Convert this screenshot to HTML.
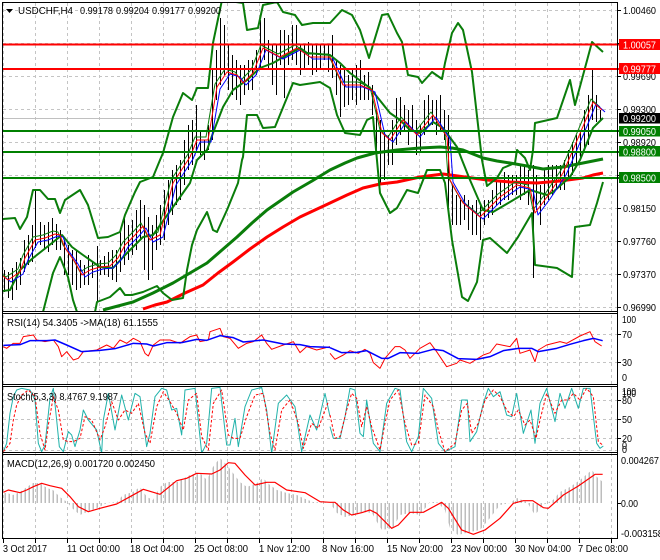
<!DOCTYPE html>
<html><head><meta charset="utf-8"><style>
html,body{margin:0;padding:0;background:#fff;width:660px;height:560px;overflow:hidden}
svg{display:block}
text{font-family:"Liberation Sans",sans-serif;font-size:10.5px;fill:#000}
.g{stroke:#c4c4c4;stroke-width:1;stroke-dasharray:3 3;fill:none}
.f{fill:none;stroke-linejoin:round}
.bb{fill:none;stroke:#0a7d0a;stroke-width:2;stroke-linejoin:round}
</style></head><body>
<svg width="660" height="560" viewBox="0 0 660 560" xmlns="http://www.w3.org/2000/svg">
<defs>
<clipPath id="cm"><rect x="3" y="3" width="614" height="308"/></clipPath>
<clipPath id="cs"><rect x="3" y="386" width="614" height="66"/></clipPath>
<pattern id="hp" width="4" height="10" patternUnits="userSpaceOnUse" x="0.5"><rect x="0" y="0" width="1.5" height="10" fill="#bdbdbd"/></pattern>
<path id="ma" d="M3 276L8 280L20 272L25 258L35 240L45 238L55 234L60 235L65 248L75 262L82 275L90 270L100 267L110 266L118 258L125 245L135 235L143 226L150 240L160 235L173 183L190 157L197 140L208 140L217 87L227 72L237 75L243 83L253 73L263 48L280 57L297 48L310 57L330 57L343 85L360 85L372 90L382 133L390 140L403 120L417 135L433 115L447 137L450 180L463 203L480 217L500 197L517 185L530 188L535 213L547 197L563 173L573 150L587 117L593 102L602 110"/>
</defs>
<rect width="660" height="560" fill="#fff"/>
<path class="g" d="M3.5 3V538M35.5 3V538M67.5 3V538M99.5 3V538M131.5 3V538M163.5 3V538M195.5 3V538M227.5 3V538M259.5 3V538M291.5 3V538M323.5 3V538M355.5 3V538M387.5 3V538M419.5 3V538M451.5 3V538M483.5 3V538M515.5 3V538M547.5 3V538M579.5 3V538M611.5 3V538"/>
<path class="g" d="M3 10.5H617M3 43.5H617M3 76.5H617M3 109.5H617M3 142.5H617M3 175.5H617M3 208.5H617M3 241.5H617M3 274.5H617M3 307.5H617M3 334.5H617M3 362.5H617M3 400.5H617M3 419.5H617M3 438.5H617M3 450.5H617"/>
<path d="M3 118.5H617" stroke="#c0c0c0" stroke-width="1"/>
<g clip-path="url(#cm)">
<path stroke="#000" stroke-width="1" fill="none" d="M4.5 270V292M8.5 272V298M12.5 268V300M16.5 262V290M20.5 258V285M24.5 240V272M28.5 235V265M32.5 225V262M35.5 190V248M40.5 222V245M44.5 225V250M48.5 222V252M52.5 218V245M56.5 224V250M60.5 230V250M64.5 240V275M68.5 245V275M72.5 250V285M76.5 250V290M80.5 260V288M84.5 265V285M88.5 255V285M92.5 262V278M97.5 246V301M100.5 260V275M104.5 256V275M108.5 252V277M112.5 250V280M116.5 250V282M120.5 230V272M124.5 216V265M128.5 225V260M132.5 220V255M136.5 210V250M140.5 200V240M144.5 205V270M148.5 217V280M152.5 225V270M156.5 215V250M160.5 205V245M164.5 190V240M168.5 180V225M172.5 170V215M176.5 165V205M180.5 160V200M184.5 140V185M188.5 125V170M192.5 120V165M196.5 105V150M200.5 130V155M204.5 140V160M208.5 125V150M212.5 70V140M216.5 50V100M220.5 18V85M224.5 25V75M228.5 45V90M232.5 55V95M236.5 60V100M240.5 65V105M244.5 65V95M248.5 60V90M252.5 60V90M256.5 50V75M260.5 20V70M264.5 18V60M268.5 40V70M272.5 45V85M276.5 45V95M280.5 30V65M284.5 30V98M288.5 35V65M292.5 25V60M296.5 25V65M300.5 45V75M304.5 45V70M308.5 42V65M312.5 45V75M316.5 45V72M320.5 45V70M324.5 45V60M328.5 45V72M332.5 35V78M336.5 60V95M340.5 65V117M344.5 70V107M348.5 75V105M352.5 70V100M356.5 65V105M360.5 60V100M364.5 75V100M368.5 72V100M372.5 85V115M376.5 110V160M380.5 120V185M384.5 130V180M388.5 135V165M392.5 120V165M396.5 98V145M400.5 97V135M404.5 105V130M408.5 110V145M412.5 105V130M416.5 120V155M420.5 125V153M424.5 100V135M428.5 95V125M432.5 100V125M436.5 100V135M440.5 95V130M444.5 110V140M448.5 115V210M452.5 185V225M456.5 195V225M460.5 200V225M464.5 195V220M468.5 200V230M472.5 205V235M476.5 200V235M480.5 205V240M484.5 200V225M488.5 200V218M492.5 190V215M496.5 180V205M500.5 180V205M504.5 172V200M508.5 175V200M512.5 175V195M516.5 175V195M520.5 165V200M524.5 165V195M528.5 170V205M533.5 165V278M536.5 175V210M540.5 185V225M544.5 170V205M548.5 165V200M552.5 165V195M556.5 165V190M560.5 165V190M564.5 160V190M568.5 150V180M572.5 142V175M576.5 135V165M580.5 130V160M584.5 110V150M588.5 95V145M592.5 70V120M596.5 95V122M600.5 110V120"/>
<path class="f" stroke="#0a7d0a" stroke-width="3" d="M103 310L118 306L133 302L153 293L173 283L190 273L207 263L222 250L237 237L252 223L267 210L280 201L293 192L312 181L330 170L345 163L357 158L375 153L397 150L420 148L440 147L452 148L463 150L473 154L483 158L497 161L510 163L527 166L543 169L553 168L563 167L583 163L603 159"/>
<path class="f" stroke="#f00" stroke-width="3" d="M143 309L155 305L167 302L185 293L203 285L218 273L233 262L250 249L267 237L283 227L300 217L315 210L330 203L347 195L363 188L380 184L397 182L420 177L443 174L465 177L487 180L510 182L537 183L560 181L583 178L593 175L603 173"/>
<path class="bb" d="M3 219L15 218L20 229L27 217L33 190L40 190L48 199L55 199L60 213L65 200L80 190L88 205L98 238L108 237L120 232L125 215L135 192L140 182L153 177L160 160L163 153L173 117L183 93L192 100L197 88L208 88L213 43L222 0L243 3L247 30L258 28L263 5L277 2L283 12L295 15L302 25L313 23L330 23L342 10L352 15L360 30L369 58L382 15L388 14L397 33L402 42L408 75L418 77L422 83L432 72L442 79L445 63L452 33L458 23L463 30L472 72L482 160L487 186L497 178L503 168L515 163L517 150L525 158L530 170L533 150L535 123L557 118L570 80L575 105L592 42L603 52"/>
<path class="bb" d="M3 291L10 290L20 270L33 258L47 247L62 235L72 247L83 255L100 267L113 268L127 253L143 237L153 235L173 207L190 183L197 160L207 150L213 133L223 107L233 90L247 80L260 68L273 63L287 55L300 48L307 53L330 55L340 63L350 73L370 88L390 113L400 120L410 130L420 133L433 122L443 128L457 147L462 160L470 180L483 210L493 212L510 202L530 190L547 195L553 192L570 177L580 160L593 128L603 118"/>
<path class="bb" d="M43 312L53 273L60 257L68 277L73 300L77 312M95 312L97 302L110 297L120 288L125 295L132 295L143 292L157 286L163 293L172 300L183 298L187 270L192 245L197 230L207 212L213 230L217 232L227 210L238 183L242 160L243 157L247 115L257 115L263 128L275 127L293 83L300 85L320 82L330 88L337 115L345 133L360 135L367 120L373 117L380 193L390 213L397 208L407 190L418 193L427 170L440 170L445 183L452 240L462 297L468 301L477 282L483 240L490 238L507 253L518 237L532 213L535 265L557 268L572 277L575 227L590 225L597 203L603 182"/>
<use href="#ma" class="f" stroke="#0a7d0a" stroke-width="1" transform="translate(-2,-3)"/>
<use href="#ma" class="f" stroke="#00f" stroke-width="1" transform="translate(3,2)"/>
<use href="#ma" class="f" stroke="#f00" stroke-width="1"/>
</g>
<path d="M3 44.5H619M3 69H619" stroke="#f00" stroke-width="2"/>
<path d="M3 131H619M3 152H619M3 178H619" stroke="#008000" stroke-width="2"/>

<!-- RSI -->
<g transform="translate(0,310) scale(.33333)" fill="none" stroke-width="3" stroke-linejoin="round">
<path stroke="#f00" d="M10 110L20 115L40 100L60 100L70 80L100 75L110 90L135 95L160 90L175 110L185 140L200 125L220 150L235 145L250 125L290 120L320 105L340 115L360 90L380 100L400 85L420 95L435 130L445 138L460 105L480 90L510 90L540 100L570 80L590 75L600 95L625 90L630 65L660 55L670 80L690 85L715 115L740 100L760 95L785 75L800 100L815 118L850 105L880 95L900 128L920 110L950 120L990 110"/>
<path stroke="#00f" stroke-width="4.5" d="M10 106L60 104L90 92L140 92L165 90L200 105L245 125L300 121L345 116L400 100L440 102L460 108L500 98L545 98L590 88L620 91L660 77L700 83L730 96L790 90L850 102L900 104L930 110L990 112"/>
</g>
<g transform="translate(330,310) scale(.33333)" fill="none" stroke-width="3" stroke-linejoin="round">
<path stroke="#f00" d="M0 130L15 148L40 135L60 122L85 130L105 118L120 130L130 158L150 175L165 145L195 110L210 110L225 120L240 145L270 115L300 98L320 125L350 170L380 160L390 150L420 160L460 135L480 128L500 102L540 110L560 85L570 130L600 120L615 155L625 120L650 105L690 95L710 100L750 78L780 65L795 95L815 108"/>
<path stroke="#00f" stroke-width="4.5" d="M0 113L35 128L80 127L110 122L155 145L175 145L210 128L265 130L310 118L340 122L385 146L440 148L480 140L520 122L565 115L605 115L625 125L680 115L720 103L760 92L790 85L818 92"/>
</g>

<!-- Stochastic -->
<g clip-path="url(#cs)">
<g transform="translate(0,310) scale(.33333)" fill="none" stroke-width="3" stroke-linejoin="round">
<path stroke="#20b2aa" d="M10 425L20 400L30 310L40 260L50 240L65 235L90 240L105 270L115 400L125 425L135 405L150 265L160 235L170 330L178 410L190 425L205 365L215 375L225 410L240 360L250 300L265 330L290 360L305 430L310 330L325 250L345 360L365 255L385 330L405 250L420 260L440 410L450 370L465 260L485 235L500 240L515 300L530 295L545 375L555 240L585 235L605 430L620 400L635 235L660 232L680 405L690 405L705 325L715 410L735 290L755 240L785 232L800 300L815 430L835 280L860 255L885 290L905 425L930 315L950 360L975 250L990 320"/>
<path stroke="#f00" stroke-dasharray="8 6" d="M10 425L30 400L40 330L50 285L65 255L85 240L105 260L120 370L135 420L145 345L160 260L175 300L190 390L205 395L220 395L240 385L255 320L275 330L300 390L315 350L335 275L355 330L375 300L395 310L415 280L435 370L450 400L470 290L490 245L510 275L530 310L550 360L565 270L590 250L605 380L625 420L640 280L665 240L685 375L700 385L720 385L740 320L765 255L790 250L810 370L825 420L845 300L870 270L895 340L910 415L935 340L955 355L985 275"/>
</g>
<g transform="translate(330,310) scale(.33333)" fill="none" stroke-width="3" stroke-linejoin="round">
<path stroke="#20b2aa" d="M0 350L10 385L30 385L45 320L60 235L75 240L90 370L100 380L110 270L130 400L150 425L170 280L195 235L210 240L230 395L245 425L265 380L280 235L305 265L325 400L345 425L375 410L395 270L412 270L420 395L440 365L460 280L475 235L490 260L510 245L530 315L545 320L560 250L580 370L603 300L615 400L630 280L650 235L675 335L690 250L705 295L725 235L745 295L760 235L780 235L800 400L810 415L820 408"/>
<path stroke="#f00" stroke-dasharray="8 6" d="M0 315L15 385L30 380L50 300L65 250L80 265L95 350L110 290L125 350L150 420L165 340L180 270L205 240L225 340L245 405L265 400L285 255L310 290L325 360L345 425L375 400L395 300L412 280L425 370L445 340L465 270L490 240L510 260L530 300L550 320L565 300L585 345L600 330L618 385L630 330L650 250L675 310L695 270L715 270L730 250L750 270L770 235L790 260L805 395L818 405"/>
</g>
</g>

<!-- MACD -->
<path fill="url(#hp)" d="M3 503V493L7 493L13 495L20 492L27 487L33 483L40 483L47 488L53 490L60 497L67 502L72 508L80 515L87 512L97 508L107 503L117 502L123 495L133 492L140 487L147 497L153 500L160 487L167 482L177 482L190 475L200 473L207 480L213 467L220 458L227 465L233 473L240 482L247 487L257 483L263 478L270 485L277 490L287 493L297 495L303 498L313 502L330 503L337 513L345 517L353 515L363 512L372 513L377 522L382 530L393 528L400 515L410 513L420 515L430 502L437 502L445 510L450 528L458 535L470 532L480 530L490 518L500 505L510 503L517 498L527 502L535 515L543 505L553 500L560 492L570 487L580 480L592 470L597 477L604 483V503Z"/>
<g transform="translate(0,440) scale(.33333)" fill="none" stroke="#f00" stroke-width="3.6" stroke-linejoin="round">
<path d="M10 157L25 150L60 158L80 150L100 140L125 130L150 137L185 145L210 170L235 200L265 215L300 205L350 192L390 170L430 148L480 163L530 122L560 115L590 100L635 102L660 90L685 68L705 70L735 105L765 135L800 127L825 127L860 150L915 158L960 185L990 187"/>
</g>
<g transform="translate(330,440) scale(.33333)" fill="none" stroke="#f00" stroke-width="3.6" stroke-linejoin="round">
<path d="M0 187L15 187L40 210L65 225L95 218L120 210L140 220L185 265L205 255L240 217L280 217L335 187L355 205L395 270L430 283L465 270L510 235L550 190L580 182L608 182L640 203L655 205L700 165L745 138L795 103L818 103"/>
</g>

<!-- Frame -->
<path fill="none" stroke="#000" stroke-width="1" d="M2.5 2.5H617.5V538.5H2.5ZM2.5 311.5H617.5M2.5 313.5H617.5M2.5 384.5H617.5M2.5 386.5H617.5M2.5 452.5H617.5M2.5 454.5H617.5"/>
<path stroke="#000" stroke-width="1" d="M617 10.5H621M617 43.5H621M617 76.5H621M617 109.5H621M617 142.5H621M617 175.5H621M617 208.5H621M617 241.5H621M617 274.5H621M617 307.5H621M617 334.5H621M617 362.5H621M617 400.5H621M617 419.5H621M617 438.5H621M617 503.5H621M3.5 539V543M35.5 539V543M67.5 539V543M99.5 539V543M131.5 539V543M163.5 539V543M195.5 539V543M227.5 539V543M259.5 539V543M291.5 539V543M323.5 539V543M355.5 539V543M387.5 539V543M419.5 539V543M451.5 539V543M483.5 539V543M515.5 539V543M547.5 539V543M579.5 539V543M611.5 539V543"/>

<!-- Titles -->
<path d="M6 9H13L9.5 13Z" fill="#000"/>
<text x="18" y="14" textLength="55" lengthAdjust="spacingAndGlyphs">USDCHF,H4</text>
<text x="80" y="14" textLength="33" lengthAdjust="spacingAndGlyphs">0.99178</text>
<text x="116" y="14" textLength="33" lengthAdjust="spacingAndGlyphs">0.99204</text>
<text x="152" y="14" textLength="33" lengthAdjust="spacingAndGlyphs">0.99177</text>
<text x="188" y="14" textLength="33" lengthAdjust="spacingAndGlyphs">0.99200</text>
<text x="7" y="326" textLength="151" lengthAdjust="spacingAndGlyphs">RSI(14) 54.3405  -&gt;MA(18) 61.1555</text>
<text x="7" y="400" textLength="111" lengthAdjust="spacingAndGlyphs">Stoch(5,3,3) 8.4767 9.1987</text>
<text x="7" y="467" textLength="148" lengthAdjust="spacingAndGlyphs">MACD(12,26,9) 0.001720 0.002450</text>

<!-- Right axis -->
<g>
<text x="623" y="14" textLength="33" lengthAdjust="spacingAndGlyphs">1.00460</text>
<text x="623" y="80" textLength="33" lengthAdjust="spacingAndGlyphs">0.99690</text>
<text x="623" y="113" textLength="33" lengthAdjust="spacingAndGlyphs">0.99300</text>
<text x="623" y="146" textLength="33" lengthAdjust="spacingAndGlyphs">0.98920</text>
<text x="623" y="212" textLength="33" lengthAdjust="spacingAndGlyphs">0.98150</text>
<text x="623" y="245" textLength="33" lengthAdjust="spacingAndGlyphs">0.97760</text>
<text x="623" y="278" textLength="33" lengthAdjust="spacingAndGlyphs">0.97370</text>
<text x="623" y="311" textLength="33" lengthAdjust="spacingAndGlyphs">0.96990</text>
</g>
<rect x="619" y="39" width="41" height="11" fill="#f00"/>
<text x="623" y="48.5" textLength="33" lengthAdjust="spacingAndGlyphs" style="fill:#fff">1.00057</text>
<rect x="619" y="63" width="41" height="11" fill="#f00"/>
<text x="623" y="72.5" textLength="33" lengthAdjust="spacingAndGlyphs" style="fill:#fff">0.99777</text>
<rect x="619" y="113" width="41" height="10.5" fill="#000"/>
<text x="623" y="122" textLength="33" lengthAdjust="spacingAndGlyphs" style="fill:#fff">0.99200</text>
<rect x="619" y="126" width="41" height="10.5" fill="#008000"/>
<text x="623" y="135" textLength="33" lengthAdjust="spacingAndGlyphs" style="fill:#fff">0.99050</text>
<rect x="619" y="146" width="41" height="10.5" fill="#008000"/>
<text x="623" y="155.5" textLength="33" lengthAdjust="spacingAndGlyphs" style="fill:#fff">0.98800</text>
<rect x="619" y="172" width="41" height="11" fill="#008000"/>
<text x="623" y="181.5" textLength="33" lengthAdjust="spacingAndGlyphs" style="fill:#fff">0.98500</text>

<text x="622" y="323" textLength="14" lengthAdjust="spacingAndGlyphs">100</text>
<text x="622" y="338" textLength="10" lengthAdjust="spacingAndGlyphs">70</text>
<text x="622" y="366" textLength="10" lengthAdjust="spacingAndGlyphs">30</text>
<text x="622" y="381" textLength="5" lengthAdjust="spacingAndGlyphs">0</text>
<text x="622" y="395" textLength="14" lengthAdjust="spacingAndGlyphs">100</text>
<text x="622" y="397" textLength="14" lengthAdjust="spacingAndGlyphs">100</text>
<text x="622" y="404" textLength="10" lengthAdjust="spacingAndGlyphs">80</text>
<text x="622" y="423" textLength="10" lengthAdjust="spacingAndGlyphs">50</text>
<text x="622" y="442" textLength="10" lengthAdjust="spacingAndGlyphs">20</text>
<text x="622" y="449" textLength="5" lengthAdjust="spacingAndGlyphs">0</text>
<text x="622" y="453" textLength="5" lengthAdjust="spacingAndGlyphs">0</text>
<text x="621" y="464" textLength="38" lengthAdjust="spacingAndGlyphs">0.004267</text>
<text x="621" y="507" textLength="17" lengthAdjust="spacingAndGlyphs">0.00</text>
<text x="621" y="537" textLength="42" lengthAdjust="spacingAndGlyphs">-0.003158</text>

<!-- Date axis -->
<text x="3" y="552" textLength="44" lengthAdjust="spacingAndGlyphs">3 Oct 2017</text>
<text x="67" y="552" textLength="53" lengthAdjust="spacingAndGlyphs">11 Oct 00:00</text>
<text x="130" y="552" textLength="54" lengthAdjust="spacingAndGlyphs">18 Oct 04:00</text>
<text x="194" y="552" textLength="54" lengthAdjust="spacingAndGlyphs">25 Oct 08:00</text>
<text x="259" y="552" textLength="51" lengthAdjust="spacingAndGlyphs">1 Nov 12:00</text>
<text x="322" y="552" textLength="52" lengthAdjust="spacingAndGlyphs">8 Nov 16:00</text>
<text x="387" y="552" textLength="56" lengthAdjust="spacingAndGlyphs">15 Nov 20:00</text>
<text x="451" y="552" textLength="56" lengthAdjust="spacingAndGlyphs">23 Nov 00:00</text>
<text x="515" y="552" textLength="56" lengthAdjust="spacingAndGlyphs">30 Nov 04:00</text>
<text x="578" y="552" textLength="50" lengthAdjust="spacingAndGlyphs">7 Dec 08:00</text>
</svg>
</body></html>
